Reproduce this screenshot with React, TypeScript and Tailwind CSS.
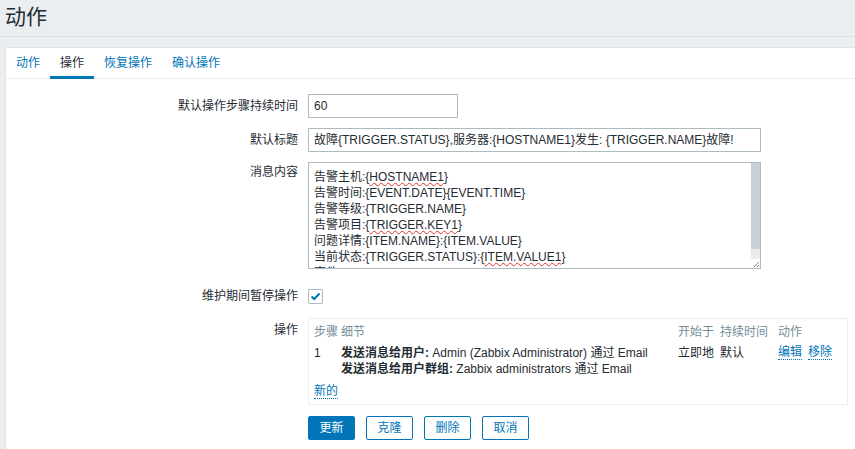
const font = { fontFamily: '"Liberation Sans", Arial, "Noto Sans CJK SC", sans-serif' };

function Wavy({ children }: { children: React.ReactNode }) {
  return <span className="underline decoration-wavy decoration-[#e03030] decoration-1 underline-offset-[1px]">{children}</span>;
}

function Link({ children }: { children: React.ReactNode }) {
  return (
    <span className="text-[#0275b8] border-b border-dotted border-[#0275b8] cursor-pointer leading-[14px] inline-block">
      {children}
    </span>
  );
}

const tabs = ['动作', '操作', '恢复操作', '确认操作'];

export default function App() {
  return (
    <div className="min-h-[449px] bg-[#ebeef1] text-[#1f2c33] text-[12px]" style={font}>
      <div className="h-[37px] border-b border-[#dde2e5] pl-[5px] flex items-center">
        <h1 className="text-[21px] leading-[24px] -mt-[2px]">动作</h1>
      </div>
      <div className="ml-[5px] mt-[10px] bg-white border-l border-t border-[#dfe4e7] pb-[10px]">
        <div className="flex h-[31px] border-b border-[#ebeef1]">
          {tabs.map((t, i) => (
            <div
              key={t}
              className={`px-[10px] flex items-center pt-[2px] border-b-[3px] -mb-[1px] ${
                i === 1 ? 'border-[#0275b8] text-[#1f2c33]' : 'border-transparent text-[#0275b8]'
              }`}
            >
              {t}
            </div>
          ))}
        </div>

        <div className="grid grid-cols-[292px_1fr] gap-x-[10px] gap-y-[10px] pt-[15px]">
          <div className="text-right leading-[24px]">默认操作步骤持续时间</div>
          <div>
            <div className="w-[150px] h-[24px] border border-[#acbbc2] px-[5px] leading-[22px]">60</div>
          </div>

          <div className="text-right leading-[24px]">默认标题</div>
          <div>
            <div className="w-[453px] h-[24px] border border-[#acbbc2] px-[5px] leading-[22px] whitespace-nowrap overflow-hidden">
              故障{'{TRIGGER.STATUS}'},服务器:{'{HOSTNAME1}'}发生: {'{TRIGGER.NAME}'}故障!
            </div>
          </div>

          <div className="text-right leading-[20px]">消息内容</div>
          <div>
            <div className="w-[453px] h-[107px] border border-[#acbbc2] flex">
              <div className="flex-1 overflow-hidden pl-[5px] pt-[6px] leading-[16px] whitespace-nowrap">
                <div>告警主机:{'{'}<Wavy>HOSTNAME1</Wavy>{'}'}</div>
                <div>告警时间:{'{EVENT.DATE}{EVENT.TIME}'}</div>
                <div>告警等级:{'{TRIGGER.NAME}'}</div>
                <div>告警项目:{'{'}<Wavy>TRIGGER.KEY1</Wavy>{'}'}</div>
                <div>问题详情:{'{ITEM.NAME}:{ITEM.VALUE}'}</div>
                <div>当前状态:{'{TRIGGER.STATUS}'}:{'{'}<Wavy>ITEM.VALUE1</Wavy>{'}'}</div>
                <div>事件ID:{'{EVENT.ID}'}</div>
              </div>
              <div className="w-[9px] flex flex-col">
                <div className="h-[86px] bg-[#c6d0d6]" />
                <div className="flex-1 bg-[#ebebeb]" />
                <div className="h-[9px] bg-white flex items-end justify-end">
                  <svg width="7" height="7" viewBox="0 0 7 7">
                    <path d="M6 1 L1 6 M6 4 L4 6" stroke="#7a8a94" strokeWidth="1" />
                  </svg>
                </div>
              </div>
            </div>
          </div>

          <div className="text-right leading-[24px] mt-[5px]">维护期间暂停操作</div>
          <div className="mt-[5px] h-[24px] flex items-center">
            <div className="w-[15px] h-[15px] border border-[#acbbc2] rounded-[1px] flex items-center justify-center">
              <svg width="11" height="9" viewBox="0 0 11 9">
                <path d="M1.5 4.5 L4.2 7 L9.5 1.5" fill="none" stroke="#0275b8" strokeWidth="2" />
              </svg>
            </div>
          </div>

          <div className="text-right leading-[24px]">操作</div>
          <div className="pr-[7px]">
            <div className="border border-[#ebeef1] pl-[5px] pt-[5px] h-[87px]">
              <div className="grid grid-cols-[27px_337px_42px_58px_1fr] leading-[16px]">
                <div className="text-[#768d99]">步骤</div>
                <div className="text-[#768d99]">细节</div>
                <div className="text-[#768d99]">开始于</div>
                <div className="text-[#768d99]">持续时间</div>
                <div className="text-[#768d99]">动作</div>

                <div className="mt-[5px]">1</div>
                <div className="mt-[5px] whitespace-nowrap">
                  <div>
                    <span className="font-bold">发送消息给用户:</span> Admin (Zabbix Administrator) 通过 Email
                  </div>
                  <div>
                    <span className="font-bold">发送消息给用户群组:</span> Zabbix administrators 通过 Email
                  </div>
                </div>
                <div className="mt-[5px]">立即地</div>
                <div className="mt-[5px]">默认</div>
                <div className="mt-[5px] flex gap-[6px] items-start">
                  <Link>编辑</Link>
                  <Link>移除</Link>
                </div>
              </div>
              <div className="mt-[5px]">
                <Link>新的</Link>
              </div>
            </div>
          </div>

          <div />
          <div className="flex gap-[11px] mt-[1px]">
            <button className="w-[47px] h-[24px] rounded-[2px] bg-[#0275b8] border border-[#0275b8] text-white">更新</button>
            <button className="w-[47px] h-[24px] rounded-[2px] bg-white border border-[#0275b8] text-[#0275b8]">克隆</button>
            <button className="w-[47px] h-[24px] rounded-[2px] bg-white border border-[#0275b8] text-[#0275b8]">删除</button>
            <button className="w-[47px] h-[24px] rounded-[2px] bg-white border border-[#0275b8] text-[#0275b8]">取消</button>
          </div>
        </div>
      </div>
    </div>
  );
}
